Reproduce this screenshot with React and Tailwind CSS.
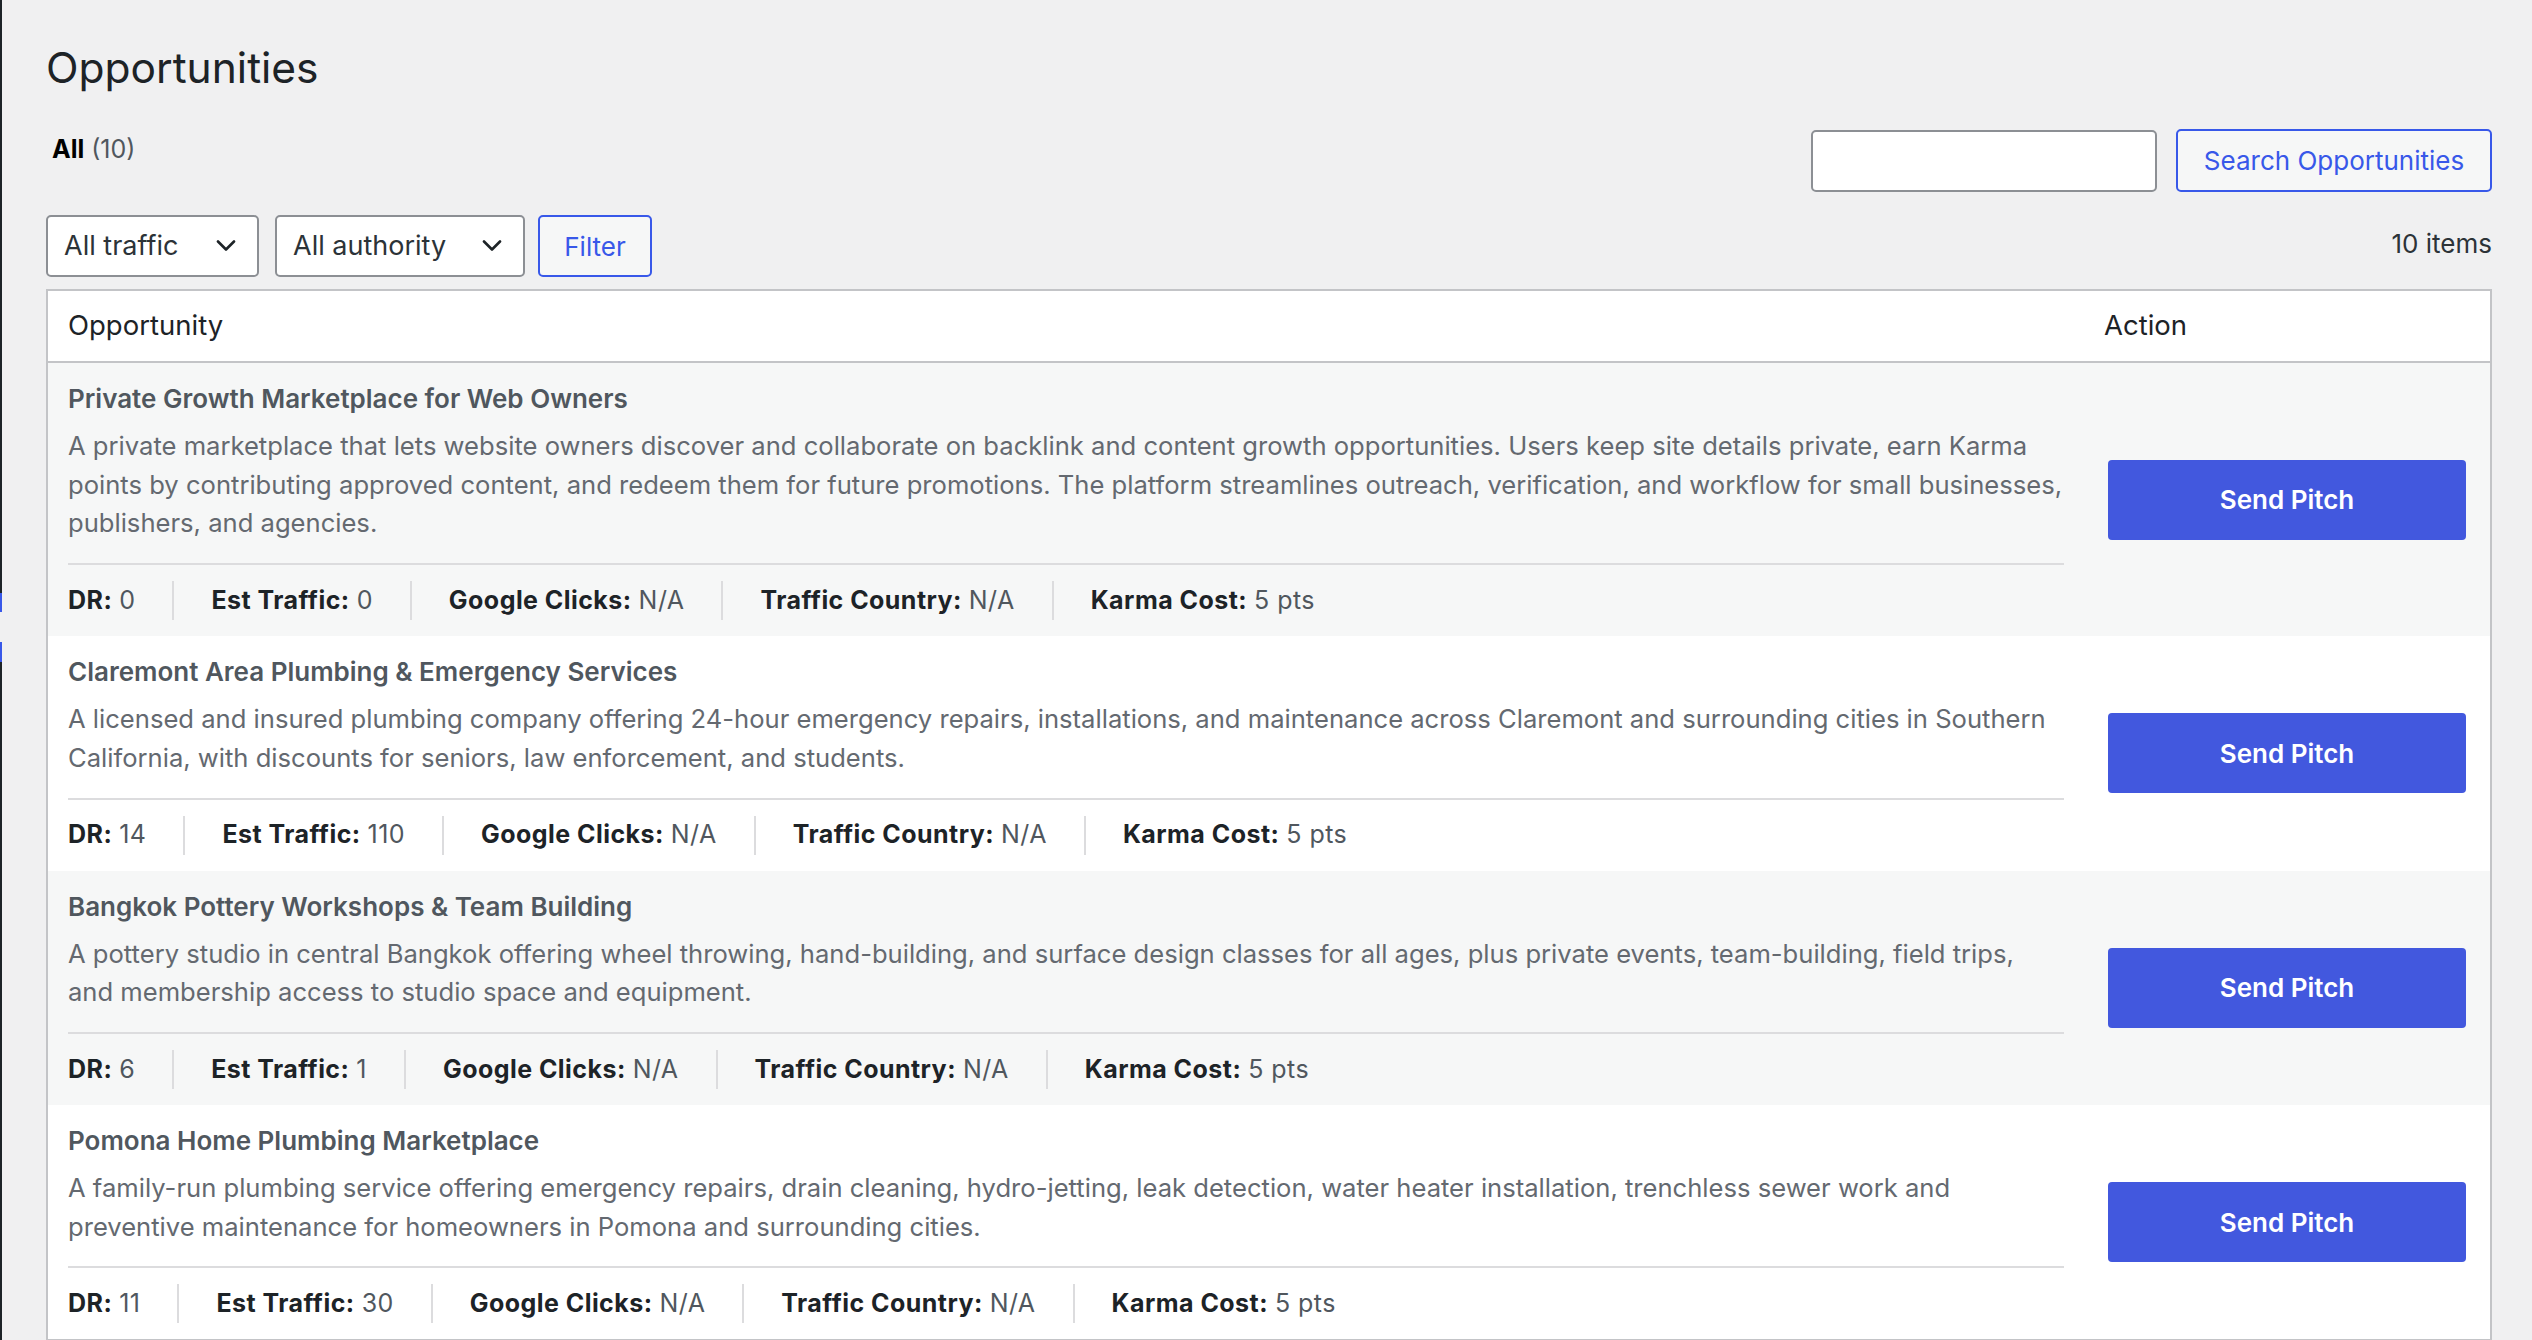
const opportunities = [
    {
        title: "Private Growth Marketplace for Web Owners",
        description:
            "A private marketplace that lets website owners discover and collaborate on backlink and content growth opportunities. Users keep site details private, earn Karma points by contributing approved content, and redeem them for future promotions. The platform streamlines outreach, verification, and workflow for small businesses, publishers, and agencies.",
        dr: "0",
        traffic: "0",
    },
    {
        title: "Claremont Area Plumbing & Emergency Services",
        description:
            "A licensed and insured plumbing company offering 24-hour emergency repairs, installations, and maintenance across Claremont and surrounding cities in Southern California, with discounts for seniors, law enforcement, and students.",
        dr: "14",
        traffic: "110",
    },
    {
        title: "Bangkok Pottery Workshops & Team Building",
        description:
            "A pottery studio in central Bangkok offering wheel throwing, hand-building, and surface design classes for all ages, plus private events, team-building, field trips, and membership access to studio space and equipment.",
        dr: "6",
        traffic: "1",
    },
    {
        title: "Pomona Home Plumbing Marketplace",
        description:
            "A family-run plumbing service offering emergency repairs, drain cleaning, hydro-jetting, leak detection, water heater installation, trenchless sewer work and preventive maintenance for homeowners in Pomona and surrounding cities.",
        dr: "11",
        traffic: "30",
    },
];

const Chevron = () => (
    <svg width="20" height="12" viewBox="0 0 20 12" fill="none" className="shrink-0">
        <path d="M2 1.5 L10 9.5 L18 1.5" stroke="#1d2327" strokeWidth="2.6" strokeLinecap="round" strokeLinejoin="round" />
    </svg>
);

const Select = ({ label, width }) => (
    <div className={`${width} h-[62px] flex items-center justify-between pl-4 pr-[21px] bg-white border-2 border-[#8c8f94] rounded-[5px] text-[27px] text-[#2c3338]`}>
        <span>{label}</span>
        <Chevron />
    </div>
);

const Metric = ({ label, value, first }) => (
    <div className={`h-[39px] flex items-center ${first ? "pr-[37px]" : "px-[37px] border-l-2 border-[#dcdcde]"}`}>
        <span className="font-bold text-[#1d2327]">{label}:</span>
        <span className="ml-[7px] text-[#50575e]">{value}</span>
    </div>
);

const OpportunityRow = ({ item, shaded }) => (
    <div className={`grid grid-cols-[1fr_406px] ${shaded ? "bg-[#f6f7f7]" : "bg-white"}`}>
        <div className="pl-5 pr-5 py-4">
            <div className="text-[26px] leading-[40px] font-semibold text-[#50575e]">{item.title}</div>
            <p className="mt-2 text-[25.6px] leading-[38.7px] text-[#646970]">{item.description}</p>
            <div className="mt-5 h-[2px] bg-[#dcdcde]" />
            <div className="pt-4 flex items-center text-[25px] tracking-[0.018em]">
                <Metric first label="DR" value={item.dr} />
                <Metric label="Est Traffic" value={item.traffic} />
                <Metric label="Google Clicks" value="N/A" />
                <Metric label="Traffic Country" value="N/A" />
                <Metric label="Karma Cost" value="5 pts" />
            </div>
        </div>
        <div className="px-5 flex items-center justify-center">
            <button className="w-[358px] h-[80px] rounded-[4px] bg-[#4258de] text-white text-[26px] font-semibold">
                Send Pitch
            </button>
        </div>
    </div>
);

export default function App() {
    return (
        <div className="flex min-h-screen bg-[#f0f0f1] font-[Inter,sans-serif]">
            <div className="w-[2px] flex flex-col shrink-0">
                <div className="h-[593px] bg-[#1d2327]" />
                <div className="h-[19px] bg-[#3858e9]" />
                <div className="h-[30px]" />
                <div className="h-[20px] bg-[#3858e9]" />
                <div className="flex-1 bg-[#1d2327]" />
            </div>

            <div className="flex-1 pl-[44px] pr-[40px]">
                <h1 className="pt-[46px] text-[42.5px] leading-[44px] text-[#1d2327]">Opportunities</h1>

                <div className="mt-[39px] flex items-start justify-between">
                    <div className="pl-[6px] text-[25px] leading-[40px]">
                        <span className="font-bold text-black">All</span>
                        <span className="ml-[7px] text-[#50575e]">(10)</span>
                    </div>
                    <div className="flex items-center gap-[19px]">
                        <input className="w-[346px] h-[62px] bg-white border-2 border-[#8c8f94] rounded-[5px] outline-none px-3 text-[26px]" />
                        <button className="w-[316px] h-[63px] border-2 border-[#3858e9] rounded-[5px] bg-[#f6f7f7] text-[#3858e9] text-[26px]">
                            Search Opportunities
                        </button>
                    </div>
                </div>

                <div className="mt-[23px] flex items-center justify-between">
                    <div className="flex items-center">
                        <Select label="All traffic" width="w-[213px]" />
                        <div className="ml-[16px]">
                            <Select label="All authority" width="w-[250px]" />
                        </div>
                        <button className="ml-[13px] w-[114px] h-[62px] border-2 border-[#3858e9] rounded-[5px] bg-[#f6f7f7] text-[#3858e9] text-[26px]">
                            Filter
                        </button>
                    </div>
                    <span className="mb-[6px] text-[26px] text-[#2c3338]">10 items</span>
                </div>

                <div className="mt-[12px] border-2 border-[#c3c4c7] bg-white">
                    <div className="grid grid-cols-[1fr_406px] h-[72px] border-b-2 border-[#c3c4c7] text-[27.5px] text-[#1d2327]">
                        <div className="pl-5 flex items-center">Opportunity</div>
                        <div className="pl-5 flex items-center">Action</div>
                    </div>
                    {opportunities.map((item, i) => (
                        <OpportunityRow key={item.title} item={item} shaded={i % 2 === 0} />
                    ))}
                </div>
            </div>
        </div>
    );
}
